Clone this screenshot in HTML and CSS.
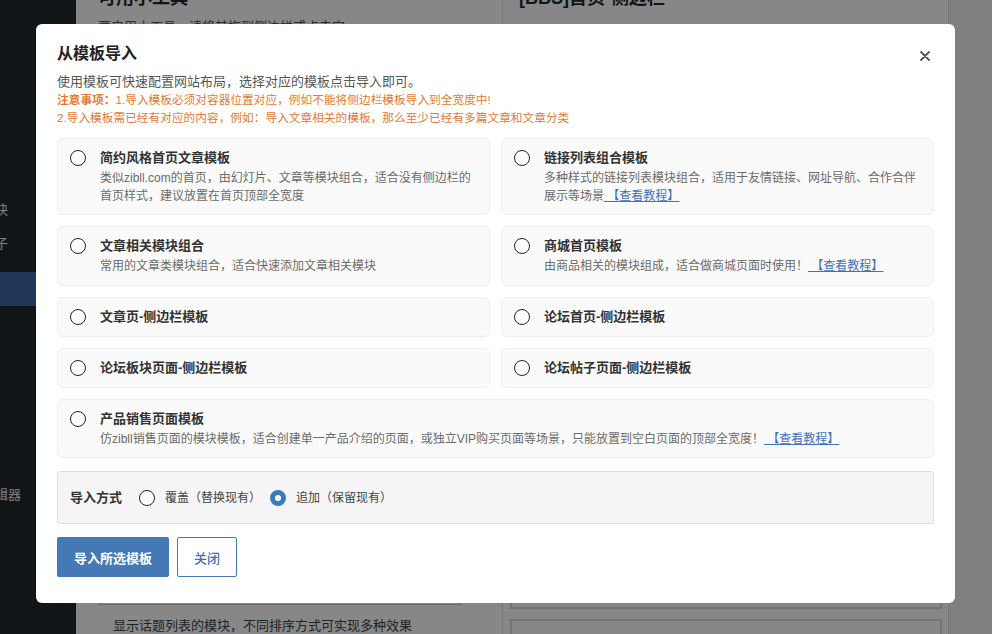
FILE: index.html
```html
<!DOCTYPE html>
<html>
	<head>
		<meta charset="utf-8" />
		<title>从模板导入</title>
		<link rel="stylesheet" href="styles.css">
	</head>
	<body>
		<div class="admin">
			<aside class="sidebar">
				<ul class="menu">
					<li><span>块</span></li>
					<li><span>子</span></li>
					<li class="current"></li>
					<li class="menu-last"><span>辑器</span></li>
				</ul>
			</aside>

			<main class="content">
				<section class="col-left">
					<h2>可用小工具</h2>
					<p class="col-intro">要启用小工具，请将其拖到侧边栏或点击它。</p>
					<div class="widget-box"></div>
					<p class="widget-desc">显示话题列表的模块，不同排序方式可实现多种效果</p>
				</section>
				<section class="col-right">
					<h2>[BBS]首页-侧边栏</h2>
					<div class="area-box"></div>
					<div class="area-box"></div>
				</section>
			</main>
		</div>

		<div class="overlay"></div>

		<div class="modal">
			<button class="modal-close" aria-label="关闭">
				<svg width="10" height="10" viewBox="0 0 10 10">
					<path d="M1 1 L9 9 M9 1 L1 9" stroke="#555" stroke-width="1.8" stroke-linecap="round" />
				</svg>
			</button>
			<h3 class="modal-title">从模板导入</h3>
			<p class="modal-desc">使用模板可快速配置网站布局，选择对应的模板点击导入即可。</p>
			<p class="modal-note"><strong>注意事项：</strong>1.导入模板必须对容器位置对应，例如不能将侧边栏模板导入到全宽度中!</p>
			<p class="modal-note">2.导入模板需已经有对应的内容，例如：导入文章相关的模板，那么至少已经有多篇文章和文章分类</p>

			<div class="tpl-grid">
				<label class="tpl-card">
					<input type="radio" name="tpl" />
					<div class="tpl-text">
						<div class="tpl-name">简约风格首页文章模板</div>
						<div class="tpl-info">类似zibll.com的首页，由幻灯片、文章等模块组合，适合没有侧边栏的首页样式，建议放置在首页顶部全宽度</div>
					</div>
				</label>
				<label class="tpl-card">
					<input type="radio" name="tpl" />
					<div class="tpl-text">
						<div class="tpl-name">链接列表组合模板</div>
						<div class="tpl-info">多种样式的链接列表模块组合，适用于友情链接、网址导航、合作合伴展示等场景<a href="#"> 【查看教程】</a></div>
					</div>
				</label>
				<label class="tpl-card">
					<input type="radio" name="tpl" />
					<div class="tpl-text">
						<div class="tpl-name">文章相关模块组合</div>
						<div class="tpl-info">常用的文章类模块组合，适合快速添加文章相关模块</div>
					</div>
				</label>
				<label class="tpl-card">
					<input type="radio" name="tpl" />
					<div class="tpl-text">
						<div class="tpl-name">商城首页模板</div>
						<div class="tpl-info">由商品相关的模块组成，适合做商城页面时使用！<a href="#"> 【查看教程】</a></div>
					</div>
				</label>
				<label class="tpl-card">
					<input type="radio" name="tpl" />
					<div class="tpl-text">
						<div class="tpl-name">文章页-侧边栏模板</div>
					</div>
				</label>
				<label class="tpl-card">
					<input type="radio" name="tpl" />
					<div class="tpl-text">
						<div class="tpl-name">论坛首页-侧边栏模板</div>
					</div>
				</label>
				<label class="tpl-card">
					<input type="radio" name="tpl" />
					<div class="tpl-text">
						<div class="tpl-name">论坛板块页面-侧边栏模板</div>
					</div>
				</label>
				<label class="tpl-card">
					<input type="radio" name="tpl" />
					<div class="tpl-text">
						<div class="tpl-name">论坛帖子页面-侧边栏模板</div>
					</div>
				</label>
				<label class="tpl-card tpl-wide">
					<input type="radio" name="tpl" />
					<div class="tpl-text">
						<div class="tpl-name">产品销售页面模板</div>
						<div class="tpl-info">仿zibll销售页面的模块模板，适合创建单一产品介绍的页面，或独立VIP购买页面等场景，只能放置到空白页面的顶部全宽度！<a href="#"> 【查看教程】</a></div>
					</div>
				</label>
			</div>

			<div class="import-mode">
				<span class="mode-label">导入方式</span>
				<label class="mode-option"><input type="radio" name="mode" />覆盖（替换现有）</label>
				<label class="mode-option"><input type="radio" name="mode" checked />追加（保留现有）</label>
			</div>

			<div class="modal-actions">
				<button class="btn btn-primary">导入所选模板</button>
				<button class="btn btn-default">关闭</button>
			</div>
		</div>
	</body>
</html>
```

FILE: styles.css
```css
body {
	margin: 0;
	font-family: "Liberation Sans", "Noto Sans CJK SC", sans-serif;
	color: #333;
	overflow: hidden;
}

/* background admin page (dimmed by the overlay) */
.admin {
	display: flex;
	height: 100vh;
	overflow: hidden;
}

.sidebar {
	width: 76px;
	flex-shrink: 0;
	background: #23282d;
}

.menu {
	list-style: none;
	margin: 0;
	padding: 193px 0 0;
	font-size: 13px;
	color: #eee;
}

.menu li {
	height: 34px;
	line-height: 34px;
	overflow: hidden;
}

.menu li span {
	margin-left: -5px;
}

.menu .current {
	margin-top: 11px;
	background: #3f67a8;
}

.menu .menu-last {
	margin-top: 172px;
}

.content {
	flex: 1;
	display: flex;
	background: #f1f1f1;
}

.col-left {
	width: 426px;
	background: #fff;
	padding: 0 40px 0 22px;
	box-sizing: border-box;
	overflow: hidden;
}

.col-left h2,
.col-right h2 {
	margin: -14px 0 0;
	font-size: 18px;
	line-height: 24px;
	color: #23282d;
}

.col-intro {
	margin: 8px 0 0;
	font-size: 13px;
	line-height: 18px;
	color: #555;
	white-space: nowrap;
}

.widget-box {
	height: 569px;
	border: 1px solid #ccc;
	box-sizing: border-box;
}

.widget-desc {
	margin: 12px 0 0 15px;
	font-size: 13px;
	line-height: 18px;
	color: #3c434a;
	white-space: nowrap;
}

.col-right {
	width: 447px;
	background: #fff;
	border-left: 1px solid #e0e0e0;
	border-right: 1px solid #ddd;
	padding: 0 6px 0 7px;
	box-sizing: border-box;
	overflow: hidden;
}

.col-right h2 {
	margin-left: 9px;
}

.area-box {
	height: 569px;
	border: 2px solid #ddd;
	box-sizing: border-box;
	margin-top: 30px;
}

.area-box + .area-box {
	margin-top: 10px;
}

.overlay {
	position: fixed;
	inset: 0;
	background: rgba(0, 0, 0, 0.47);
}

/* modal */
.modal {
	position: fixed;
	top: 24px;
	left: 36px;
	width: 919px;
	padding: 19px 21px 26px;
	box-sizing: border-box;
	background: #fff;
	border-radius: 6px;
}

.modal-close {
	position: absolute;
	top: 27px;
	right: 25px;
	padding: 0;
	border: none;
	background: none;
	line-height: 0;
	cursor: pointer;
}

.modal-title {
	margin: 0;
	font-size: 16px;
	line-height: 22px;
	font-weight: bold;
	color: #222;
}

.modal-desc {
	margin: 8px 0 0;
	font-size: 13px;
	line-height: 18px;
	color: #555;
}

.modal-note {
	margin: 0;
	font-size: 11.7px;
	line-height: 18px;
	color: #e27b36;
}

.tpl-grid {
	display: grid;
	grid-template-columns: 1fr 1fr;
	gap: 11px;
	margin-top: 11px;
}

.tpl-card {
	display: flex;
	align-items: flex-start;
	padding: 9px 12px;
	background: #fafafa;
	border: 1px solid #eee;
	border-radius: 6px;
	cursor: pointer;
}

.tpl-wide {
	grid-column: span 2;
}

input[type="radio"] {
	appearance: none;
	-webkit-appearance: none;
	flex-shrink: 0;
	width: 16px;
	height: 16px;
	margin: 0;
	border: 1.5px solid #222;
	border-radius: 50%;
	background: #fff;
	box-sizing: border-box;
}

input[type="radio"]:checked {
	border: 5px solid #3e79b8;
}

.tpl-card input[type="radio"] {
	margin: 2px 14px 0 0;
}

.tpl-name {
	font-size: 13px;
	line-height: 20px;
	font-weight: bold;
	color: #333;
}

.tpl-info {
	margin-top: 2px;
	font-size: 12px;
	line-height: 17.5px;
	color: #6b6b6b;
}

.tpl-info a {
	color: #3d73b8;
	text-decoration: underline;
}

.import-mode {
	display: flex;
	align-items: center;
	margin-top: 13px;
	padding: 16px 12px 15px;
	background: #f5f5f5;
	border: 1px solid #ddd;
	border-radius: 3px;
	line-height: 20px;
}

.mode-label {
	font-size: 13px;
	font-weight: 600;
	color: #333;
	margin-right: 17px;
}

.mode-option {
	display: flex;
	align-items: center;
	gap: 10px;
	font-size: 12px;
	line-height: 20px;
	color: #444;
	margin-right: 9px;
}

.modal-actions {
	display: flex;
	gap: 8px;
	margin-top: 13px;
}

.btn {
	height: 40px;
	padding: 0 16px;
	font-family: inherit;
	font-size: 13px;
	border: 1px solid #4479b6;
	border-radius: 2px;
	cursor: pointer;
}

.btn-primary {
	background: #4479b6;
	color: #fff;
	font-weight: bold;
}

.btn-default {
	background: #fff;
	color: #3d73b8;
	font-weight: 500;
}
```
